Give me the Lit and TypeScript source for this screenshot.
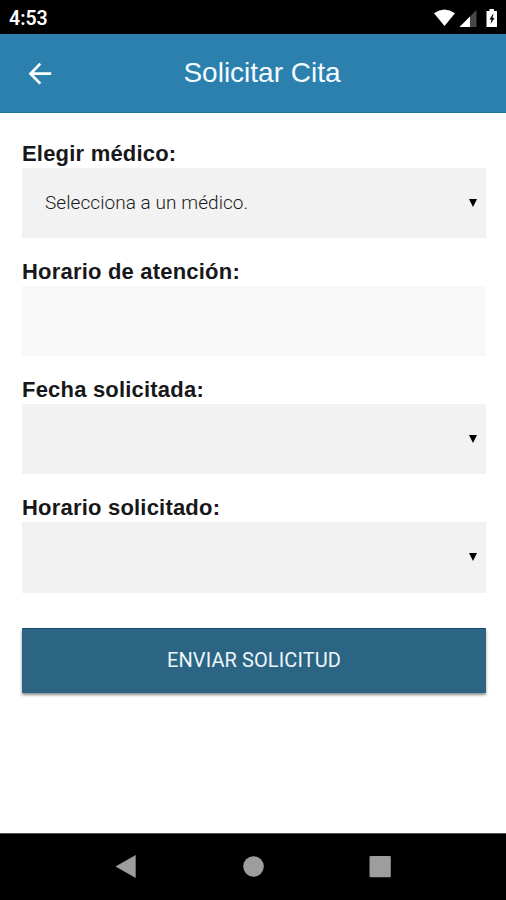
import { LitElement, html, css } from "lit";
import { customElement, property } from "lit/decorators.js";

@customElement("form-field")
class FormField extends LitElement {
  @property() label = "";
  @property() value = "";
  @property({ type: Boolean }) select = false;

  static styles = css`
    :host { display: block; height: 118.1px; }
    .label {
      box-sizing: border-box; height: 31px; padding-top: 2px; white-space: nowrap;
      font: bold 22px/29px "Liberation Sans", Arial, sans-serif;
      letter-spacing: 0.2px; color: #18181a;
    }
    .box {
      box-sizing: border-box; height: 70.3px; padding: 0 9px 0 23px;
      display: flex; align-items: center; justify-content: space-between;
      background: #f8f8f8;
    }
    .box.select { background: #f2f2f2; }
    .value {
      font: 300 19px/24px Roboto, sans-serif; letter-spacing: 0.06px;
      color: #1a1a1a; white-space: nowrap;
    }
    .caret { display: block; width: 8px; height: 8px; }
  `;

  render() {
    return html`
      <div class="label">${this.label}</div>
      <div class="box ${this.select ? "select" : ""}">
        <span class="value">${this.value}</span>
        ${this.select
          ? html`<svg class="caret" viewBox="0 0 8 8"><path d="M0 0h8L4 8z" fill="#000" /></svg>`
          : ""}
      </div>
    `;
  }
}

@customElement("app-root")
class AppRoot extends LitElement {
  static styles = css`
    :host { display: block; }
    .screen {
      width: 506px; height: 900px; display: flex; flex-direction: column;
      background: #fff; overflow: hidden;
    }
    .status {
      height: 34px; flex: none; box-sizing: border-box; padding: 2px 8px 0 9px;
      display: flex; align-items: center; justify-content: space-between;
      background: #000; color: #fff; font: 600 19.5px/30px Roboto, sans-serif;
    }
    .time { padding-top: 2px; }
    .status svg { display: block; width: 66px; height: 22px; }
    .header {
      height: 79px; flex: none; box-sizing: border-box; padding: 0 28px;
      display: grid; grid-template-columns: 24px 1fr 24px; align-items: center;
      background: #2c80ae; border-bottom: 1px solid #1f719f;
    }
    .header svg { display: block; width: 24px; height: 24px; }
    .title {
      margin-left: 18px; text-align: center; color: #f4fbff; white-space: nowrap;
      font: 28px/34px "Liberation Sans", Arial, sans-serif;
    }
    .form { flex: 1; padding: 24px 20px 0 22px; }
    .submit {
      display: block; width: 100%; height: 65px; margin-top: 18.5px; padding: 0 0 1px;
      border: 0; border-top: 1px solid #14506f; border-radius: 1px;
      background: #2c6584; color: #edf6fb;
      font: 400 20px/62px Roboto, sans-serif; letter-spacing: 0.1px;
      box-shadow: 0 2px 3px rgba(0, 0, 0, 0.45);
    }
    .nav { height: 67px; flex: none; background: #000; }
    .nav svg { display: block; width: 506px; height: 67px; }
  `;

  render() {
    return html`
      <div class="screen">
        <div class="status">
          <span class="time">4:53</span>
          <svg viewBox="0 0 66 22">
            <path d="M2 6.200Q12.500-1 23 6.200L12.500 19z" fill="#fff" />
            <path d="M44.500 3v17H27.500z" fill="#484848" />
            <path d="M38 9.500V20H27.500z" fill="#fff" />
            <path d="M57.500 2h4.500v2h3v16H54.500V4h3z" fill="#fff" />
            <path d="M61.500 6l-4 6.500h2L58.500 17l4-6h-2z" fill="#000" />
          </svg>
        </div>
        <div class="header">
          <svg viewBox="0 0 24 24">
            <path d="M23.200 12.700H2.500M12.300 2.600L2.500 12.700l9.800 9.900" fill="none" stroke="#fff" stroke-width="2.700" />
          </svg>
          <div class="title">Solicitar Cita</div>
        </div>
        <div class="form">
          <form-field label="Elegir médico:" value="Selecciona a un médico." select></form-field>
          <form-field label="Horario de atención:"></form-field>
          <form-field label="Fecha solicitada:" select></form-field>
          <form-field label="Horario solicitado:" select></form-field>
          <button class="submit">ENVIAR SOLICITUD</button>
        </div>
        <div class="nav">
          <svg viewBox="0 0 506 67" fill="#9d9d9d">
            <path d="M0 0H506V1H0z" fill="#555" />
            <path d="M115.500 33.500L135.700 22v23z" />
            <circle cx="253.500" cy="33.500" r="10.300" />
            <rect x="369.500" y="23" width="21.300" height="21.300" rx="1" />
          </svg>
        </div>
      </div>
    `;
  }
}
